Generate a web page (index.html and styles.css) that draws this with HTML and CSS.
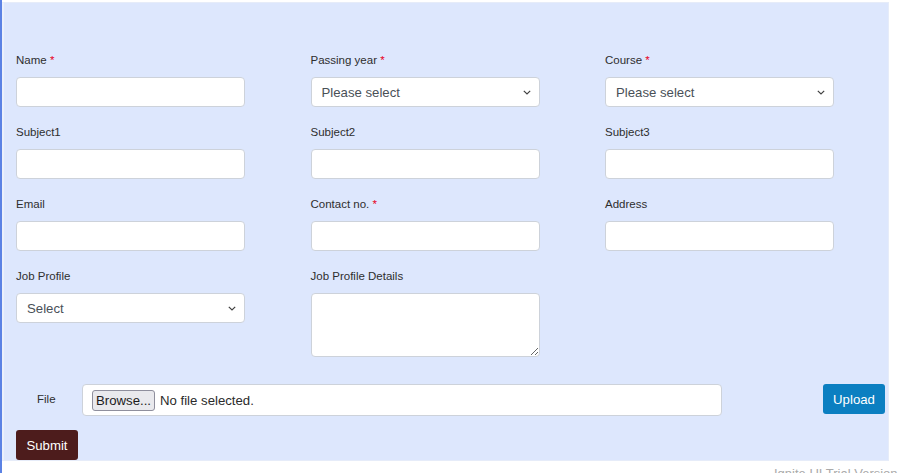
FILE: index.html
```html
<!DOCTYPE html>
<html lang="en">
<head>
<meta charset="utf-8">
<title>Form</title>
<link rel="stylesheet" href="styles.css">
</head>
<body>
<form class="panel">
  <div class="grid">
    <div class="field">
      <label class="lbl">Name <span class="req">*</span></label>
      <input class="ctl" type="text">
    </div>
    <div class="field">
      <label class="lbl">Passing year <span class="req">*</span></label>
      <select class="ctl sel"><option>Please select</option></select>
    </div>
    <div class="field">
      <label class="lbl">Course <span class="req">*</span></label>
      <select class="ctl sel"><option>Please select</option></select>
    </div>
    <div class="field">
      <label class="lbl">Subject1</label>
      <input class="ctl" type="text">
    </div>
    <div class="field">
      <label class="lbl">Subject2</label>
      <input class="ctl" type="text">
    </div>
    <div class="field">
      <label class="lbl">Subject3</label>
      <input class="ctl" type="text">
    </div>
    <div class="field">
      <label class="lbl">Email</label>
      <input class="ctl" type="text">
    </div>
    <div class="field">
      <label class="lbl">Contact no. <span class="req">*</span></label>
      <input class="ctl" type="text">
    </div>
    <div class="field">
      <label class="lbl">Address</label>
      <input class="ctl" type="text">
    </div>
    <div class="field">
      <label class="lbl">Job Profile</label>
      <select class="ctl sel"><option>Select</option></select>
    </div>
    <div class="field">
      <label class="lbl">Job Profile Details</label>
      <textarea class="ctl area"></textarea>
    </div>
  </div>
  <div class="file-row">
    <span class="file-lbl">File</span>
    <div class="file-box">
      <span class="browse">Browse...</span>
      <span class="file-none">No file selected.</span>
    </div>
    <button type="button" class="btn upload">Upload</button>
  </div>
  <button type="button" class="btn submit">Submit</button>
</form>
<div class="trial">Ignite UI Trial Version</div>
</body>
</html>
```
FILE: styles.css
```css
html, body {
  margin: 0;
  padding: 0;
  height: 100%;
  overflow: hidden;
  background: #ffffff;
}
body {
  border-left: 2px solid #5b82e4;
  box-sizing: border-box;
  font-family: "Liberation Sans", Arial, sans-serif;
  color: #333333;
}
.panel {
  margin: 2px 0 0 0;
  width: 887px;
  box-sizing: border-box;
  background: #dde7fd;
  border: 1px solid #e6ecf9;
  border-left: 2px solid #ebf0fb;
  padding: 50px 3px 0 12px;
}
.grid {
  display: grid;
  grid-template-columns: repeat(3, 229px);
  column-gap: 65.5px;
  row-gap: 18px;
}
.field {
  display: flex;
  flex-direction: column;
  gap: 10px;
}
.lbl {
  font-size: 11.5px;
  line-height: 14px;
  height: 14px;
  color: #2e2e2e;
}
.req {
  color: #e8001c;
}
.ctl {
  box-sizing: border-box;
  width: 229px;
  height: 30px;
  margin: 0;
  border: 1px solid #cdd2da;
  border-radius: 4px;
  background: #ffffff;
  font-family: "Liberation Sans", Arial, sans-serif;
  font-size: 13.2px;
  color: #495057;
  padding: 0 10px;
  outline: none;
}
.sel {
  appearance: none;
  -webkit-appearance: none;
  background-image: url("data:image/svg+xml;utf8,<svg xmlns='http://www.w3.org/2000/svg' width='8' height='5' viewBox='0 0 8 5'><path d='M0.8 0.8 L4 4 L7.2 0.8' fill='none' stroke='%23444' stroke-width='1.2'/></svg>");
  background-repeat: no-repeat;
  background-position: right 8px center;
  background-size: 8px 5px;
}
.area {
  height: 64px;
  resize: vertical;
  padding: 6px 10px;
}
.file-row {
  display: flex;
  align-items: flex-start;
  margin-top: 27px;
}
.file-lbl {
  box-sizing: border-box;
  width: 66px;
  padding-left: 21px;
  height: 32px;
  line-height: 30px;
  font-size: 11.5px;
  color: #2e2e2e;
}
.file-box {
  box-sizing: border-box;
  width: 640px;
  height: 32px;
  background: #ffffff;
  border: 1px solid #cdd2da;
  border-radius: 4px;
  display: flex;
  align-items: center;
  padding-left: 9px;
  font-size: 13.2px;
  color: #333333;
}
.browse {
  box-sizing: border-box;
  height: 21px;
  line-height: 19px;
  padding: 0 3px;
  width: 63px;
  text-align: center;
  background: #e9e9ed;
  border: 1px solid #8f8f9d;
  border-radius: 3px;
  color: #1b1b1b;
}
.file-none {
  margin-left: 5px;
  color: #2b2b2b;
}
.btn {
  font-family: "Liberation Sans", Arial, sans-serif;
  font-size: 13.2px;
  color: #ffffff;
  border: none;
  border-radius: 3px;
  height: 30px;
  margin: 0;
  padding: 0 10px;
  cursor: pointer;
}
.upload {
  margin-left: auto;
  width: 62px;
  padding: 0;
  background: #0b7fc1;
}
.submit {
  display: block;
  margin-top: 14px;
  width: 62px;
  padding: 0;
  background: #4d1c1c;
}
.trial {
  margin-top: 5px;
  padding-left: 772px;
  font-size: 13px;
  line-height: 15px;
  color: #aaaaaa;
  white-space: nowrap;
}
```
